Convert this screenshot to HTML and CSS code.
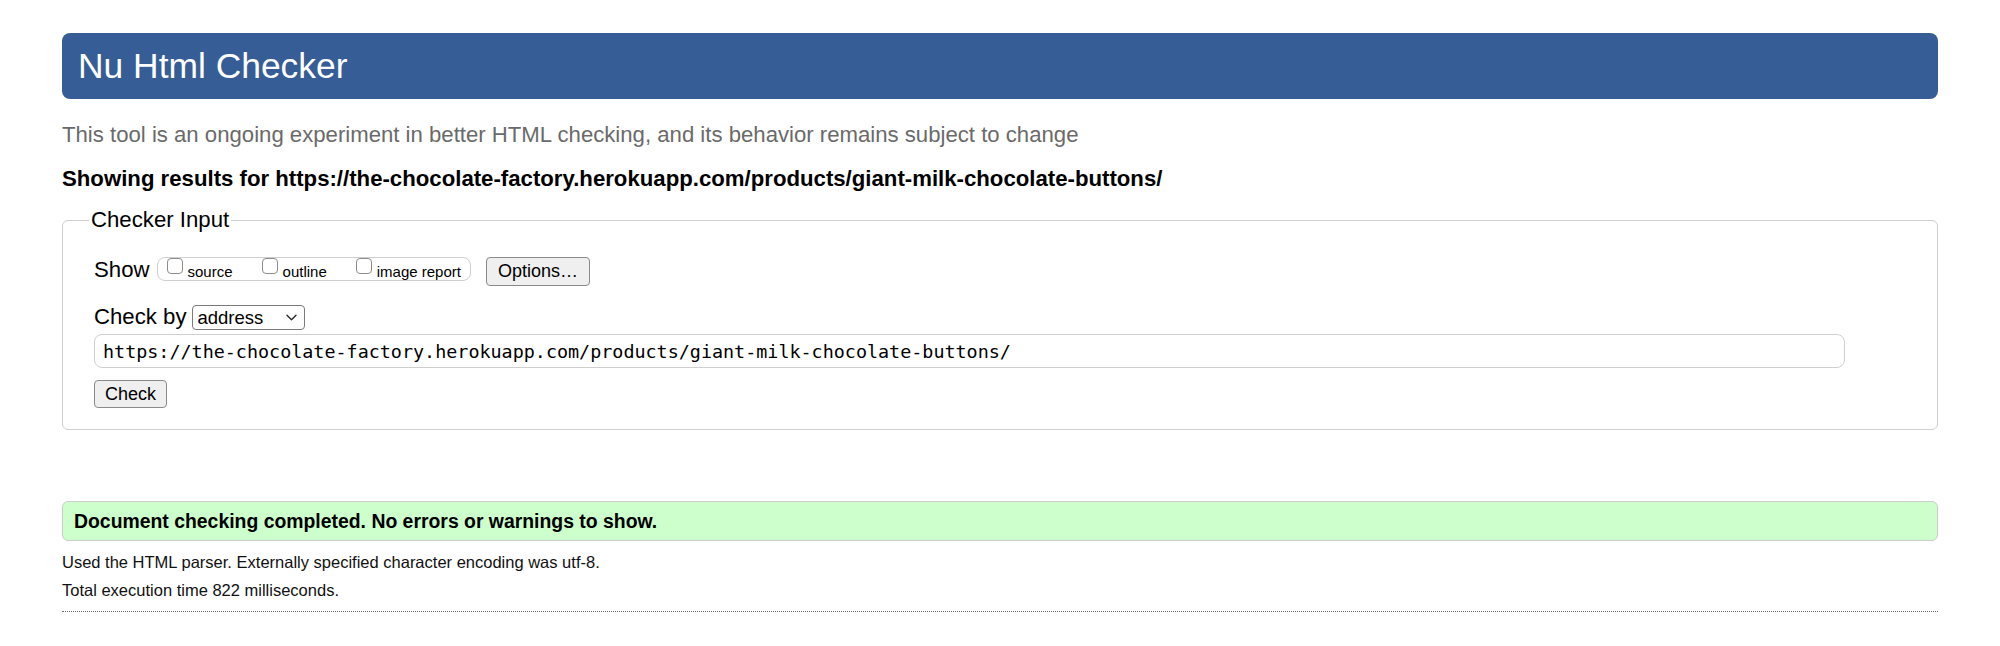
FILE: index.html
```html
<!DOCTYPE html>
<html lang="en">
<head>
<meta charset="utf-8">
<title>Showing results for https://the-chocolate-factory.herokuapp.com/products/giant-milk-chocolate-buttons/ - Nu Html Checker</title>
<link rel="stylesheet" href="styles.css">
</head>
<body>
<div class="page">
  <h1 class="title">Nu Html Checker</h1>
  <p class="tagline">This tool is an ongoing experiment in better HTML checking, and its behavior remains subject to change</p>
  <p class="showing">Showing results for https://the-chocolate-factory.herokuapp.com/products/giant-milk-chocolate-buttons/</p>
  <form class="checker" onsubmit="return false">
    <fieldset class="checker-input">
      <legend>Checker Input</legend>
      <div class="row show-row">
        <span class="row-label">Show</span>
        <span class="show-group"><label class="opt"><input type="checkbox" class="cb">source</label><label class="opt"><input type="checkbox" class="cb">outline</label><label class="opt"><input type="checkbox" class="cb">image report</label></span>
        <button type="button" class="btn options">Options…</button>
      </div>
      <div class="row by-row">
        <label class="row-label" for="docselect">Check by</label>
        <span class="select-wrap"><select id="docselect" class="select"><option>address</option><option>file upload</option><option>text input</option></select><svg class="chevron" width="11" height="7" viewBox="0 0 11 7" aria-hidden="true"><path d="M1 1.2l4.5 4.5 4.5-4.5" fill="none" stroke="#222" stroke-width="1.3" stroke-linecap="round" stroke-linejoin="round"/></svg></span>
      </div>
      <input class="url" type="url" value="https://the-chocolate-factory.herokuapp.com/products/giant-milk-chocolate-buttons/">
      <div class="submit-row"><button type="submit" class="btn check">Check</button></div>
    </fieldset>
  </form>
  <p class="success">Document checking completed. No errors or warnings to show.</p>
  <p class="details first">Used the HTML parser. Externally specified character encoding was utf-8.</p>
  <p class="details">Total execution time 822 milliseconds.</p>
  <hr class="rule">
</div>
</body>
</html>
```
FILE: styles.css
```css
* { box-sizing: border-box; }

html, body {
  margin: 0;
  padding: 0;
  background: #fff;
}

body {
  font-family: "Liberation Sans", Arial, Helvetica, sans-serif;
  color: #000;
}

.page {
  padding: 33px 62px 0;
}

.title {
  margin: 0;
  height: 66px;
  padding-left: 16px;
  font-size: 35.4px;
  line-height: 66px;
  font-weight: normal;
  color: #fff;
  background: #365d95;
  border-radius: 8px;
}

.tagline {
  margin: 23px 0 0;
  font-size: 22.17px;
  line-height: 26px;
  color: #6a6a6a;
}

.showing {
  margin: 18px 0 0;
  font-size: 22.2px;
  line-height: 26px;
  font-weight: bold;
}

.checker {
  margin: 15px 0 0;
}

.checker-input {
  margin: 0;
  min-width: 0;
  padding: 0 92px 21px 31px;
  border: 1px solid #cfcfcf;
  border-radius: 6px;
}

.checker-input legend {
  margin-left: -5px;
  padding: 0 2px;
  font-size: 22.2px;
  line-height: 26px;
}

.row {
  display: flex;
  align-items: baseline;
}

.show-row {
  margin-top: 24px;
}

.by-row {
  margin-top: 18px;
}

.row-label {
  font-size: 22.2px;
  line-height: 26px;
}

.show-group {
  display: inline-block;
  height: 24px;
  margin-left: 7px;
  padding: 0 9px;
  border: 1px solid #cfcfcf;
  border-radius: 8px;
  font-size: 15px;
  line-height: 16px;
  white-space: nowrap;
}

.opt {
  display: inline;
}

.opt + .opt {
  margin-left: 29px;
}

.cb {
  -webkit-appearance: none;
  appearance: none;
  display: inline-block;
  width: 16px;
  height: 16px;
  margin: 0 5px 3px 0;
  vertical-align: baseline;
  border: 1px solid #8c8c8c;
  border-radius: 4px;
  background: #fff;
}

.btn {
  font-family: "Liberation Sans", Arial, Helvetica, sans-serif;
  font-size: 18px;
  line-height: 21px;
  color: #000;
  background: #efefef;
  border: 1px solid #8a8a8a;
  border-radius: 4px;
}

.options {
  height: 29px;
  margin-left: 15px;
  padding: 0 11px;
}

.select-wrap {
  display: inline-flex;
  align-items: center;
  margin-left: 5px;
}

.select {
  -webkit-appearance: none;
  appearance: none;
  width: 113px;
  height: 25px;
  padding: 0 0 0 5px;
  font-family: "Liberation Sans", Arial, Helvetica, sans-serif;
  font-size: 18.5px;
  color: #000;
  background: #fff;
  border: 1px solid #7a7a7a;
  border-radius: 4px;
}

.chevron {
  margin-left: -19px;
  margin-right: 8px;
  pointer-events: none;
}

.url {
  display: block;
  width: 100%;
  height: 34px;
  margin-top: 4px;
  padding: 0 8px;
  font-family: "DejaVu Sans Mono", "Liberation Mono", monospace;
  font-size: 18.4px;
  color: #000;
  background: #fff;
  border: 1px solid #cfcfcf;
  border-radius: 8px;
}

.submit-row {
  margin-top: 12px;
}

.check {
  height: 28px;
  padding: 0 10px;
}

.success {
  margin: 71px 0 0;
  height: 40px;
  padding-left: 11px;
  font-size: 19.4px;
  line-height: 38px;
  font-weight: bold;
  background: #ccffcc;
  border: 1px solid #cccccc;
  border-radius: 6px;
}

.details {
  margin: 0;
  font-size: 16.5px;
  line-height: 28px;
  color: #111;
}

.details.first {
  margin-top: 7px;
}

.rule {
  height: 0;
  margin: 7px 0 0;
  border: 0;
  border-top: 1px dotted #666;
}
```
